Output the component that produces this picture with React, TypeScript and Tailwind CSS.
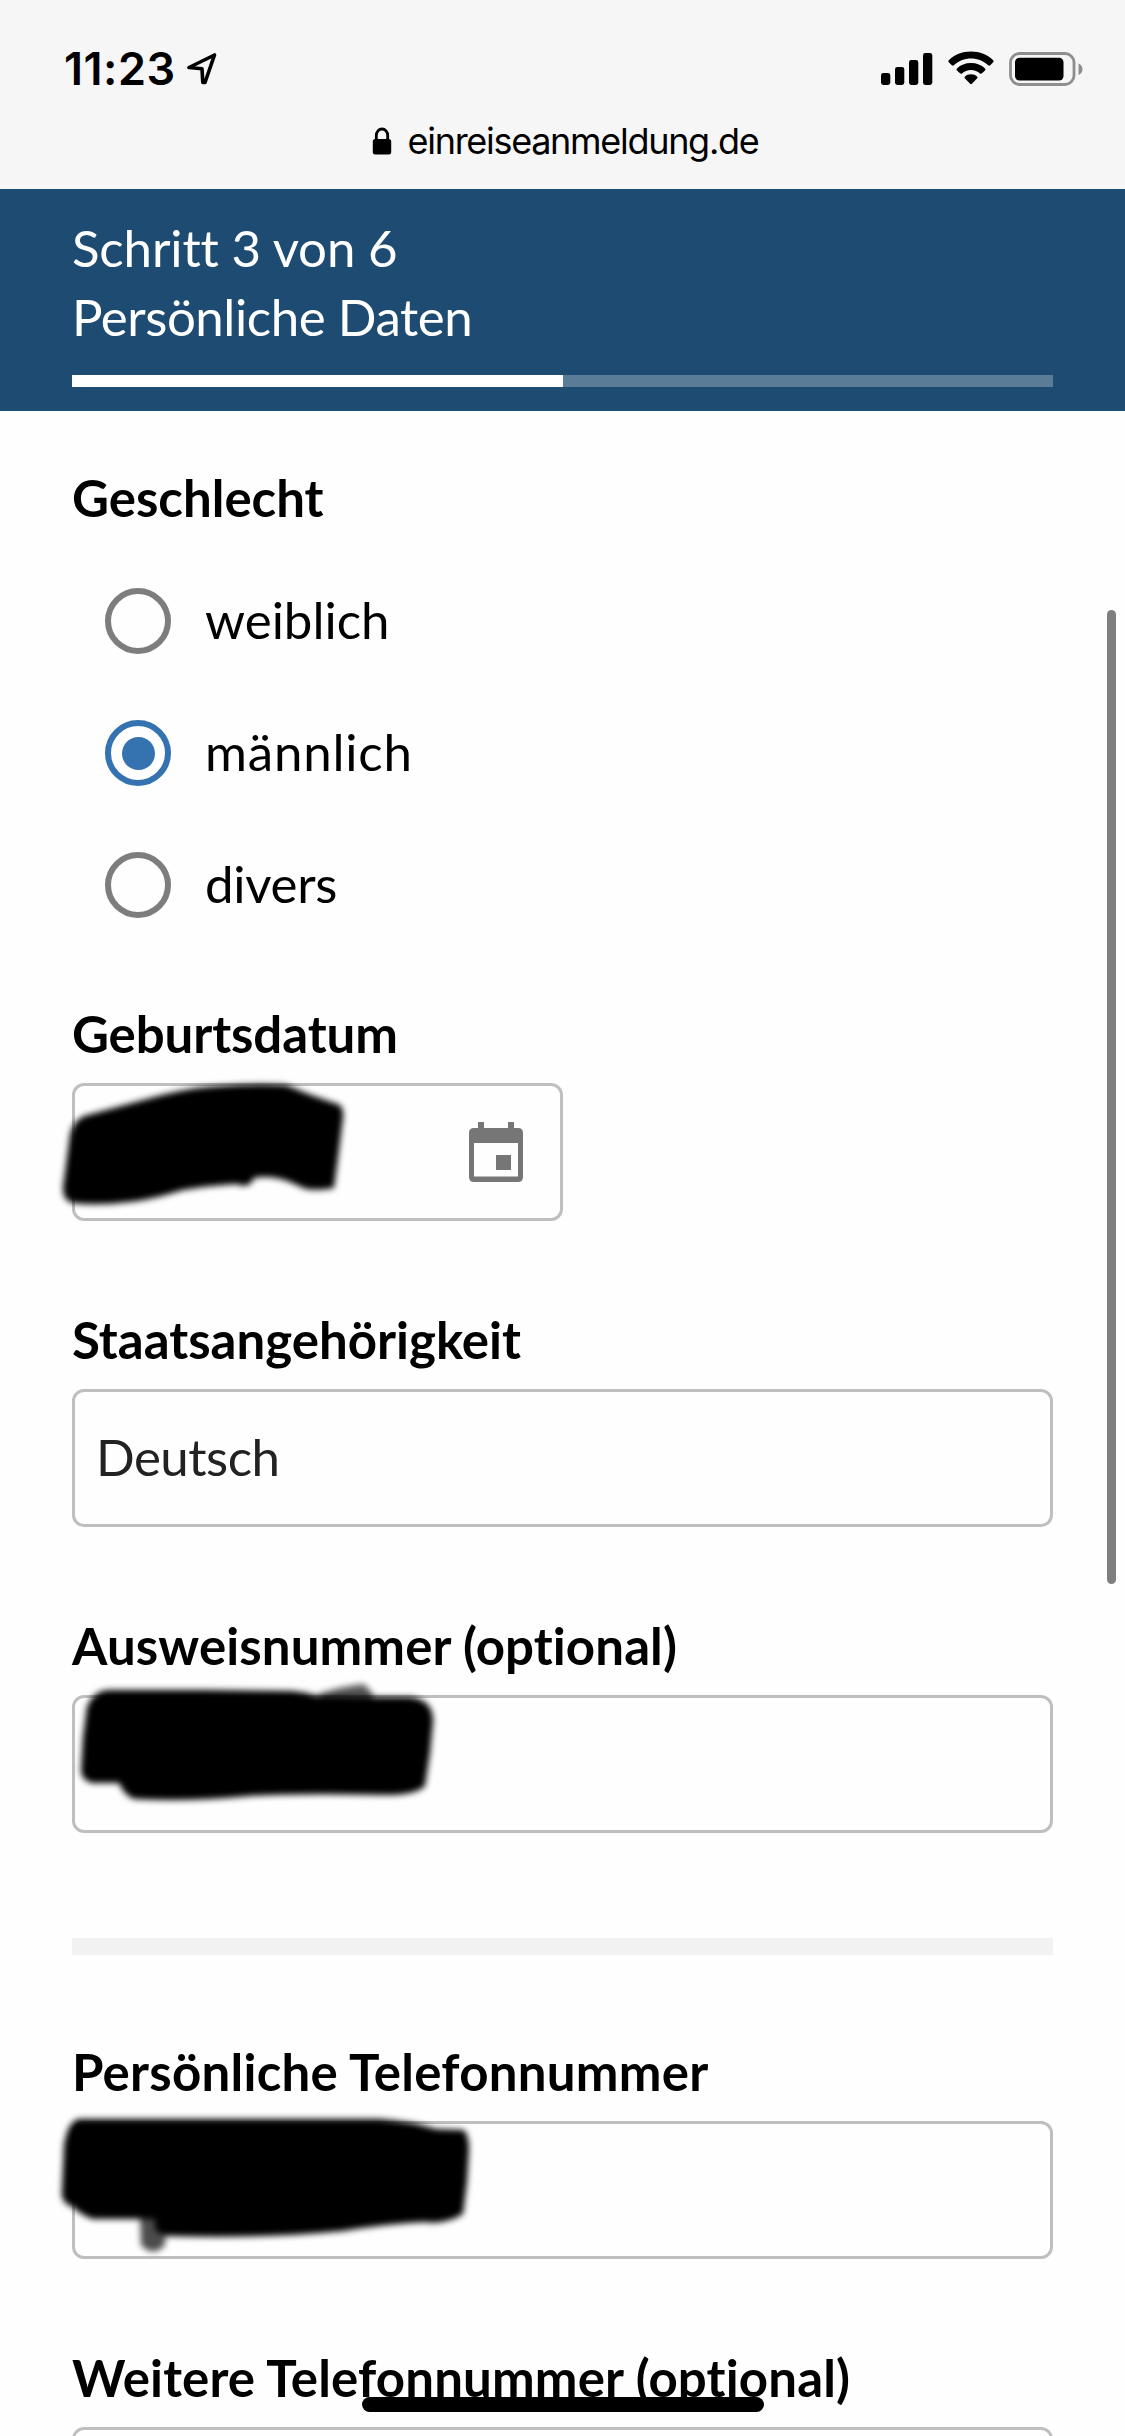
type FieldProps = {
  label: string;
  spacing?: string;
  value?: string;
  className?: string;
  box?: string;
  children?: React.ReactNode;
};

function Field({ label, spacing, value, className = "", box = "", children }: FieldProps) {
  return (
    <div className={className}>
      <Label text={label} spacing={spacing} />
      <div
        className={`relative mt-[17px] flex h-[138px] items-center rounded-[12px] border-[3px] border-[#bfbfbf] pl-[21px] ${box}`}
      >
        {value && (
          <span className="pb-[2px] text-[51px] leading-[68px] tracking-[-0.5px] text-[#222222]">{value}</span>
        )}
        {children}
      </div>
    </div>
  );
}

function Label({ text, spacing = "" }: { text: string; spacing?: string }) {
  return (
    <div className={`h-[68px] whitespace-nowrap pt-[2px] text-[51px] font-bold leading-[68px] text-black ${spacing}`}>
      {text}
    </div>
  );
}

function Radio({ label, spacing = "", checked = false }: { label: string; spacing?: string; checked?: boolean }) {
  return (
    <div className="flex h-[132px] items-center gap-[34px] pl-[33px]">
      <span
        className={`flex size-[66px] items-center justify-center rounded-full border-[6px] ${
          checked ? "border-[#3573b0]" : "border-[#7d7d7d]"
        }`}
      >
        {checked && <span className="size-[33px] rounded-full bg-[#3573b0]" />}
      </span>
      <span className={`pb-[2px] text-[51px] leading-[68px] text-black ${spacing}`}>{label}</span>
    </div>
  );
}

// Marker stroke drawn over a filled-in value
function Marker({ id, viewBox, className, children }: { id: string; viewBox: string; className: string; children: React.ReactNode }) {
  return (
    <svg viewBox={viewBox} className={`absolute overflow-visible ${className}`}>
      <defs>
        <filter id={id} x="-10%" y="-20%" width="120%" height="140%">
          <feGaussianBlur stdDeviation="3" />
        </filter>
      </defs>
      <g filter={`url(#${id})`}>{children}</g>
    </svg>
  );
}

function StatusBar() {
  return (
    <div className="flex h-[112px] items-end justify-between pl-[64px] pr-[42px] font-['Inter',sans-serif]">
      <div className="flex items-end">
        <span className="mb-[8px] text-[45px] font-semibold leading-[70px] tracking-[0.5px]">11:23</span>
        <svg viewBox="0 0 30 32" className="mb-[27px] ml-[11px] h-[32px] w-[30px]">
          <path
            d="M2 14.5 27.5 2 18 29.5 15.8 29.5 15 15.8Z"
            fill="none"
            stroke="black"
            strokeWidth="3.6"
            strokeLinejoin="round"
          />
        </svg>
      </div>
      <div className="flex items-end pb-[26px]">
        <svg viewBox="0 0 52 34" className="mb-px h-[34px] w-[52px]">
          <rect x="0" y="22" width="9.3" height="12" rx="2.4" />
          <rect x="14" y="16" width="9.3" height="18" rx="2.4" />
          <rect x="28" y="9" width="9.3" height="25" rx="2.4" />
          <rect x="42" y="2" width="9.3" height="32" rx="2.4" />
        </svg>
        <svg viewBox="0 0 46 34" className="mb-px ml-[15px] h-[34px] w-[46px]">
          <path d="M23 0.5C31.8 0.5 39.6 3.8 45.2 9.2 45.8 9.8 45.8 10.6 45.2 11.2L42.2 14.2C41.6 14.8 40.8 14.8 40.2 14.2 35.6 9.9 29.6 7.4 23 7.4S10.4 9.9 5.8 14.2C5.2 14.8 4.4 14.8 3.8 14.2L0.8 11.2C0.2 10.6 0.2 9.8 0.8 9.2 6.4 3.8 14.2 0.5 23 0.5Z" />
          <path d="M23 12C28.6 12 33.4 13.9 37 17.4 37.6 18 37.6 18.8 37 19.4L34 22.3C33.4 22.9 32.6 22.9 32 22.4 29.6 20.3 26.5 19 23 19S16.4 20.3 14 22.4C13.4 22.9 12.6 22.9 12 22.3L9 19.4C8.4 18.8 8.4 18 9 17.4 12.6 13.9 17.4 12 23 12Z" />
          <path d="M23 23.3C25.6 23.3 27.5 24.2 29 25.5 29.6 26.1 29.6 26.8 29 27.4L24.1 32.6C23.5 33.3 22.5 33.3 21.9 32.6L17 27.4C16.4 26.8 16.4 26.1 17 25.5 18.5 24.2 20.4 23.3 23 23.3Z" />
        </svg>
        <svg viewBox="0 0 74 34" className="ml-[15px] h-[34px] w-[74px]">
          <rect x="1.5" y="1.5" width="63.5" height="31" rx="9" fill="none" stroke="#8e8e8e" strokeWidth="2.8" />
          <rect x="6" y="5.7" width="48.5" height="22.8" rx="4.5" />
          <path d="M69.5 11.5C72 12.5 73.5 14.8 73.5 17.3S72 22 69.5 23Z" fill="#8e8e8e" />
        </svg>
      </div>
    </div>
  );
}

export default function App() {
  return (
    <div className="relative h-[2436px] w-[1125px] overflow-hidden bg-[#fefefe] font-['Lato',sans-serif] [font-variant-ligatures:none]">
      <header className="h-[189px] bg-[#f6f6f6] text-black">
        <StatusBar />
        <div className="flex items-center justify-center pl-[5px]">
          <svg viewBox="0 0 20 28" className="h-[28px] w-[20px]">
            <path d="M4.3 13V8.5A5.7 6.5 0 0 1 15.7 8.5V13" fill="none" stroke="black" strokeWidth="2.8" />
            <rect x="0.8" y="12" width="18.4" height="15.5" rx="2.5" />
          </svg>
          <span className="ml-[16px] font-['Inter',sans-serif] text-[36px] leading-[58px] tracking-[-1.3px]">
            einreiseanmeldung.de
          </span>
        </div>
      </header>

      <section className="h-[222px] bg-[#1d4b71] px-[72px] pt-[25px] text-[51px] leading-[68.5px] text-white">
        <div className="tracking-[-0.15px]">Schritt 3 von 6</div>
        <div className="tracking-[-0.45px]">Persönliche Daten</div>
        <div className="mt-[24px] h-[12px] bg-[#5a7c97]">
          <div className="h-full w-1/2 bg-white" />
        </div>
      </section>

      <main className="px-[72px] pt-[51px]">
        <Label text="Geschlecht" />
        <div className="mt-[25px]">
          <Radio label="weiblich" />
          <Radio label="männlich" spacing="tracking-[0.8px]" checked />
          <Radio label="divers" spacing="tracking-[-0.3px]" />
        </div>

        <Field
          label="Geburtsdatum"
          spacing="tracking-[-0.1px]"
          className="mt-[47px]"
          box="w-[491px] justify-end pr-[37px]"
        >
          <svg viewBox="0 0 54 60" className="h-[60px] w-[54px]" fill="#767676">
            <path d="M9 0H15V6H39V0H45V6H49Q54 6 54 11V55Q54 60 49 60H5Q0 60 0 55V11Q0 6 5 6H9ZM5 21V54.5H49V21Z" fillRule="evenodd" />
            <rect x="27" y="33" width="15" height="15" />
          </svg>
          <Marker id="m1" viewBox="60 1083 300 120" className="-left-[15px] -top-[3px] h-[120px] w-[300px]">
            <path d="M84 1116 147 1099Q190 1087 220 1086 255 1083 286 1085L311 1095 340 1105Q344 1110 343 1118L339 1150 334 1188Q320 1191 306 1189L290 1182Q272 1175 254 1178L251 1183Q246 1188 236 1184 205 1186 183 1190 150 1200 129 1202 98 1206 72 1203 60 1199 64 1180L70 1135Q73 1121 84 1116Z" />
          </Marker>
        </Field>

        <Field label="Staatsangehörigkeit" value="Deutsch" className="mt-[83px]" />

        <Field label="Ausweisnummer (optional)" spacing="tracking-[0.1px]" className="mt-[83px]">
          <Marker id="m2" viewBox="60 1683 380 120" className="-left-[15px] -top-[15px] h-[120px] w-[380px]">
            <path d="M318 1694Q343 1686 364 1684L373 1694 370 1712 330 1710Z" opacity="0.65" />
            <path d="M107 1690 208 1690 292 1691Q305 1692 318 1696L373 1697 410 1697Q434 1700 433 1722L430 1753 425 1786Q415 1796 380 1795 300 1793 250 1796 190 1802 134 1799 124 1795 119 1783L92 1783Q81 1780 81 1770L83 1737 87 1707Q93 1692 107 1690Z" />
          </Marker>
        </Field>

        <hr className="mt-[105px] h-[17px] border-0 bg-[#f2f2f2]" />

        <Field label="Persönliche Telefonnummer" spacing="tracking-[0.25px]" className="mt-[81px]">
          <Marker id="m3" viewBox="60 2116 420 140" className="-left-[15px] -top-[8px] h-[140px] w-[420px]">
            <path d="M140 2215H166L165 2245Q153 2258 141 2245Z" opacity="0.7" />
            <path d="M79 2119H220L379 2119Q410 2121 436 2129L464 2130Q469 2136 469 2150L467 2182 463 2214Q445 2225 425 2222 385 2224 343 2231 260 2239 166 2236L155 2230V2219H92Q78 2213 73 2207 60 2203 62 2190L64 2145Q68 2121 79 2119Z" />
          </Marker>
        </Field>

        <Field label="Weitere Telefonnummer (optional)" spacing="tracking-[0.15px]" className="mt-[83px]" />
      </main>

      <div className="absolute left-[1107px] top-[610px] h-[974px] w-[9px] rounded-full bg-[#7f7f7f]" />
      <div className="absolute left-[362px] top-[2397px] h-[15px] w-[402px] rounded-full bg-black" />
    </div>
  );
}
